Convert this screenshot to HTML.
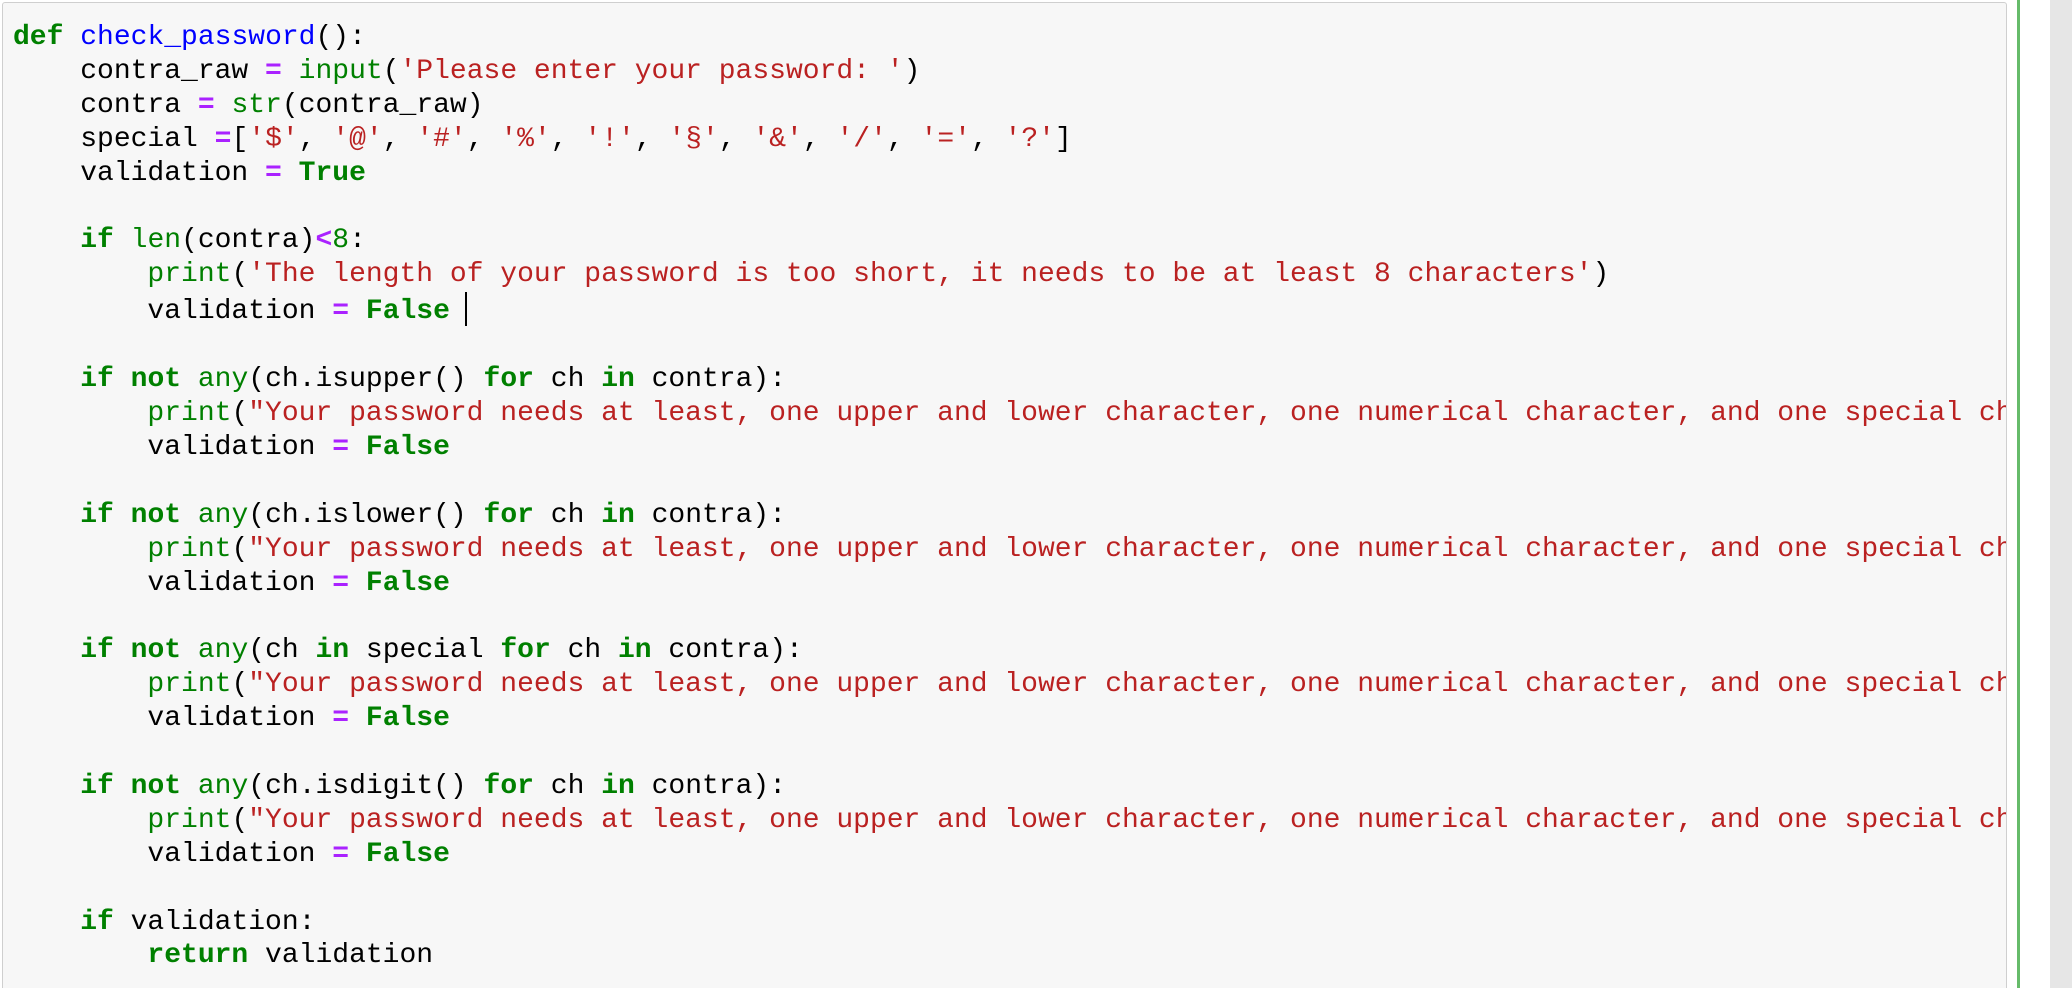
<!DOCTYPE html>
<html><head><meta charset="utf-8"><style>
html,body{margin:0;padding:0;background:#fff;width:2072px;height:988px;overflow:hidden;position:relative}
.box{position:absolute;left:2px;top:2px;width:2003px;height:1000px;background:#f7f7f7;border:1px solid #cfcfcf;border-radius:3px;overflow:hidden}
pre{margin:0;position:absolute;left:10px;top:18px;font-family:"Liberation Mono",monospace;font-size:28px;line-height:33.9px;color:#000;white-space:pre}
.k{color:#008000;font-weight:bold}
.b{color:#008000}
.f{color:#0000ff}
.s{color:#ba2121}
.o{color:#aa22ff;font-weight:bold}
.n{color:#008000}
.cur{display:inline-block;width:2px;height:34px;background:#000;vertical-align:-8px;margin-left:-2px}
.green{position:absolute;left:2017px;top:0;width:3px;height:988px;background:#66bb6a}
.gray{position:absolute;left:2050px;top:0;width:22px;height:988px;background:#e6e6e6}
</style></head><body>
<div class="box"><pre><span class="k">def</span> <span class="f">check_password</span>():
    contra_raw <span class="o">=</span> <span class="b">input</span>(<span class="s">'Please enter your password: '</span>)
    contra <span class="o">=</span> <span class="b">str</span>(contra_raw)
    special <span class="o">=</span>[<span class="s">'$'</span>, <span class="s">'@'</span>, <span class="s">'#'</span>, <span class="s">'%'</span>, <span class="s">'!'</span>, <span class="s">'§'</span>, <span class="s">'&amp;'</span>, <span class="s">'/'</span>, <span class="s">'='</span>, <span class="s">'?'</span>]
    validation <span class="o">=</span> <span class="k">True</span>

    <span class="k">if</span> <span class="b">len</span>(contra)<span class="o">&lt;</span><span class="n">8</span>:
        <span class="b">print</span>(<span class="s">'The length of your password is too short, it needs to be at least 8 characters'</span>)
        validation <span class="o">=</span> <span class="k">False</span> <span class="cur"></span>

    <span class="k">if</span> <span class="k">not</span> <span class="b">any</span>(ch.isupper() <span class="k">for</span> ch <span class="k">in</span> contra):
        <span class="b">print</span>(<span class="s">"Your password needs at least, one upper and lower character, one numerical character, and one special character"</span>)
        validation <span class="o">=</span> <span class="k">False</span>

    <span class="k">if</span> <span class="k">not</span> <span class="b">any</span>(ch.islower() <span class="k">for</span> ch <span class="k">in</span> contra):
        <span class="b">print</span>(<span class="s">"Your password needs at least, one upper and lower character, one numerical character, and one special character"</span>)
        validation <span class="o">=</span> <span class="k">False</span>

    <span class="k">if</span> <span class="k">not</span> <span class="b">any</span>(ch <span class="k">in</span> special <span class="k">for</span> ch <span class="k">in</span> contra):
        <span class="b">print</span>(<span class="s">"Your password needs at least, one upper and lower character, one numerical character, and one special character"</span>)
        validation <span class="o">=</span> <span class="k">False</span>

    <span class="k">if</span> <span class="k">not</span> <span class="b">any</span>(ch.isdigit() <span class="k">for</span> ch <span class="k">in</span> contra):
        <span class="b">print</span>(<span class="s">"Your password needs at least, one upper and lower character, one numerical character, and one special character"</span>)
        validation <span class="o">=</span> <span class="k">False</span>

    <span class="k">if</span> validation:
        <span class="k">return</span> validation</pre></div>
<div class="green"></div>
<div class="gray"></div>
</body></html>
